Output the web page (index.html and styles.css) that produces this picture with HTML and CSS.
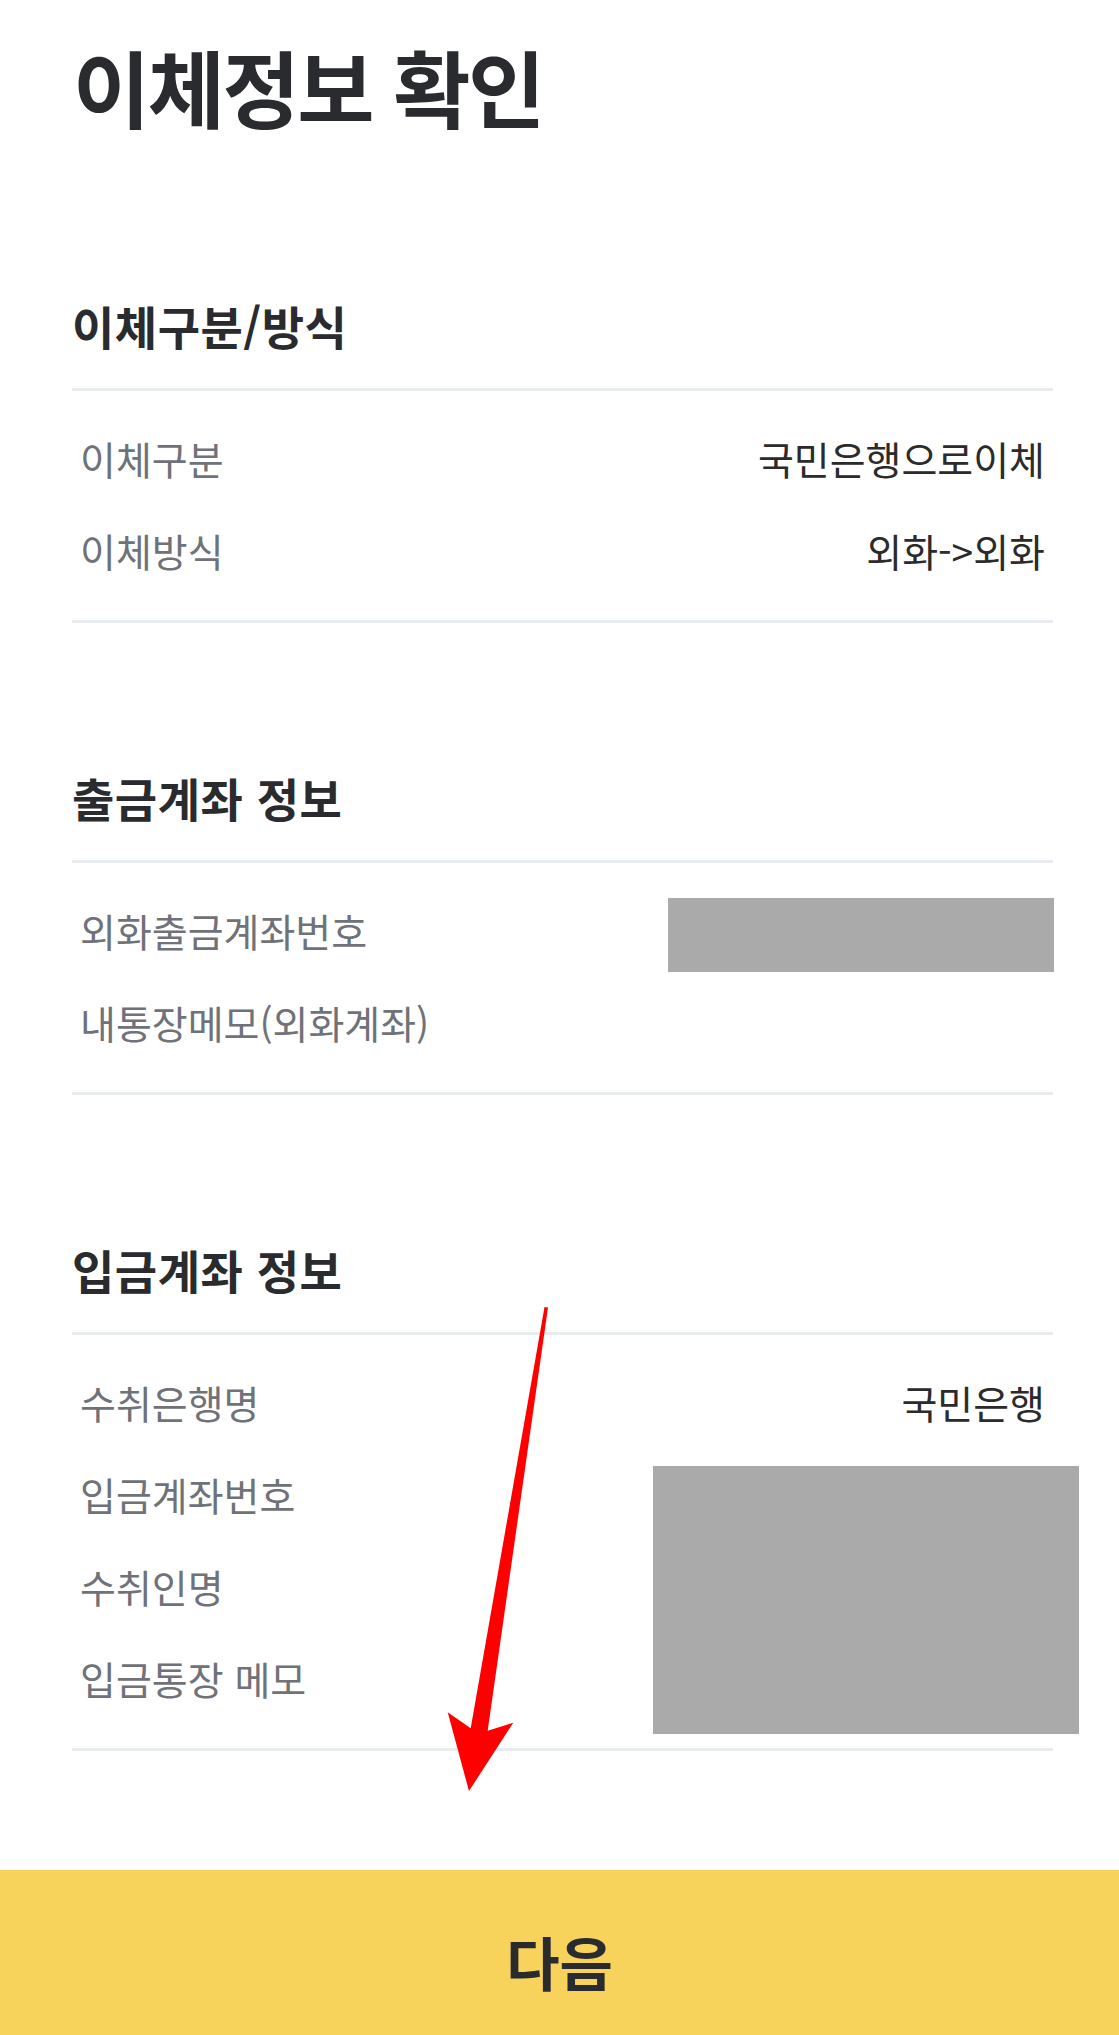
FILE: index.html
```html
<!DOCTYPE html>
<html lang="ko">
<head>
    <meta charset="UTF-8">
    <meta name="viewport" content="width=device-width, initial-scale=1.0">
    <title>이체정보 확인</title>
    <link rel="stylesheet" href="styles.css">
</head>
<body>
    <main class="pagina">
        <h1 class="titulo">이체정보 확인</h1>

        <section class="seccion primera">
            <h2 class="seccion-titulo">이체구분/방식</h2>
            <div class="lista">
                <div class="fila">
                    <span class="etiqueta">이체구분</span>
                    <span class="valor">국민은행으로이체</span>
                </div>
                <div class="fila">
                    <span class="etiqueta">이체방식</span>
                    <span class="valor">외화-&gt;외화</span>
                </div>
            </div>
        </section>

        <section class="seccion">
            <h2 class="seccion-titulo">출금계좌 정보</h2>
            <div class="lista">
                <div class="fila">
                    <span class="etiqueta">외화출금계좌번호</span>
                    <span class="valor"></span>
                </div>
                <div class="fila">
                    <span class="etiqueta">내통장메모(외화계좌)</span>
                    <span class="valor"></span>
                </div>
                <div class="tapa tapa-salida"></div>
            </div>
        </section>

        <section class="seccion">
            <h2 class="seccion-titulo">입금계좌 정보</h2>
            <div class="lista">
                <div class="fila">
                    <span class="etiqueta">수취은행명</span>
                    <span class="valor">국민은행</span>
                </div>
                <div class="fila">
                    <span class="etiqueta">입금계좌번호</span>
                    <span class="valor"></span>
                </div>
                <div class="fila">
                    <span class="etiqueta">수취인명</span>
                    <span class="valor"></span>
                </div>
                <div class="fila">
                    <span class="etiqueta">입금통장 메모</span>
                    <span class="valor"></span>
                </div>
                <div class="tapa tapa-entrada"></div>
            </div>
        </section>
    </main>

    <button class="boton" type="button">다음</button>

    <svg class="flecha" viewBox="440 1300 120 500" width="120" height="500" aria-hidden="true">
        <polygon fill="#ff0000" points="544.5,1307 548,1307.5 487.7,1730.7 513.3,1722.7 469,1791 447.7,1712.3 470.7,1728.3"/>
    </svg>
</body>
</html>
```

FILE: styles.css
```css
body {
    font-family: "Noto Sans CJK KR", "Noto Sans", sans-serif;
    margin: 0;
    background-color: #ffffff;
    color: #2a2b2f;
    display: flex;
    flex-direction: column;
    min-height: 100vh;
    position: relative;
}
.pagina {
    flex: 1;
    padding: 0 66px 0 72px;
}
.titulo {
    margin: 36px 0 0 0;
    padding-left: 1px;
    font-size: 84px;
    line-height: 100px;
    font-weight: bold;
    letter-spacing: -2.5px;
    color: #2a2b2f;
}
.seccion {
    margin-top: 144px;
}
.seccion.primera {
    margin-top: 159px;
}
.seccion-titulo {
    margin: 0;
    padding-bottom: 33px;
    border-bottom: 3px solid #e9ecef;
    font-size: 46px;
    line-height: 60px;
    font-weight: bold;
    letter-spacing: 0.5px;
    color: #2a2b2f;
}
.lista {
    position: relative;
    padding: 21px 8px 24px 8px;
    border-bottom: 3px solid #e9ecef;
}
.fila {
    display: flex;
    justify-content: space-between;
    align-items: center;
    height: 92px;
    font-size: 39px;
    letter-spacing: 0;
}
.etiqueta {
    color: #6f7278;
}
.valor {
    color: #2b2b2b;
}
.tapa {
    position: absolute;
    background-color: #aaaaaa;
}
.tapa-salida {
    top: 35px;
    left: 596px;
    width: 386px;
    height: 74px;
}
.tapa-entrada {
    top: 131px;
    left: 581px;
    width: 426px;
    height: 268px;
}
.boton {
    height: 165px;
    padding: 16px 0 0 0;
    border: none;
    background-color: #f7d35c;
    font-family: inherit;
    font-size: 58px;
    font-weight: bold;
    letter-spacing: 0;
    color: #2a2b2f;
}
.flecha {
    position: absolute;
    left: 440px;
    top: 1300px;
    pointer-events: none;
}
```
